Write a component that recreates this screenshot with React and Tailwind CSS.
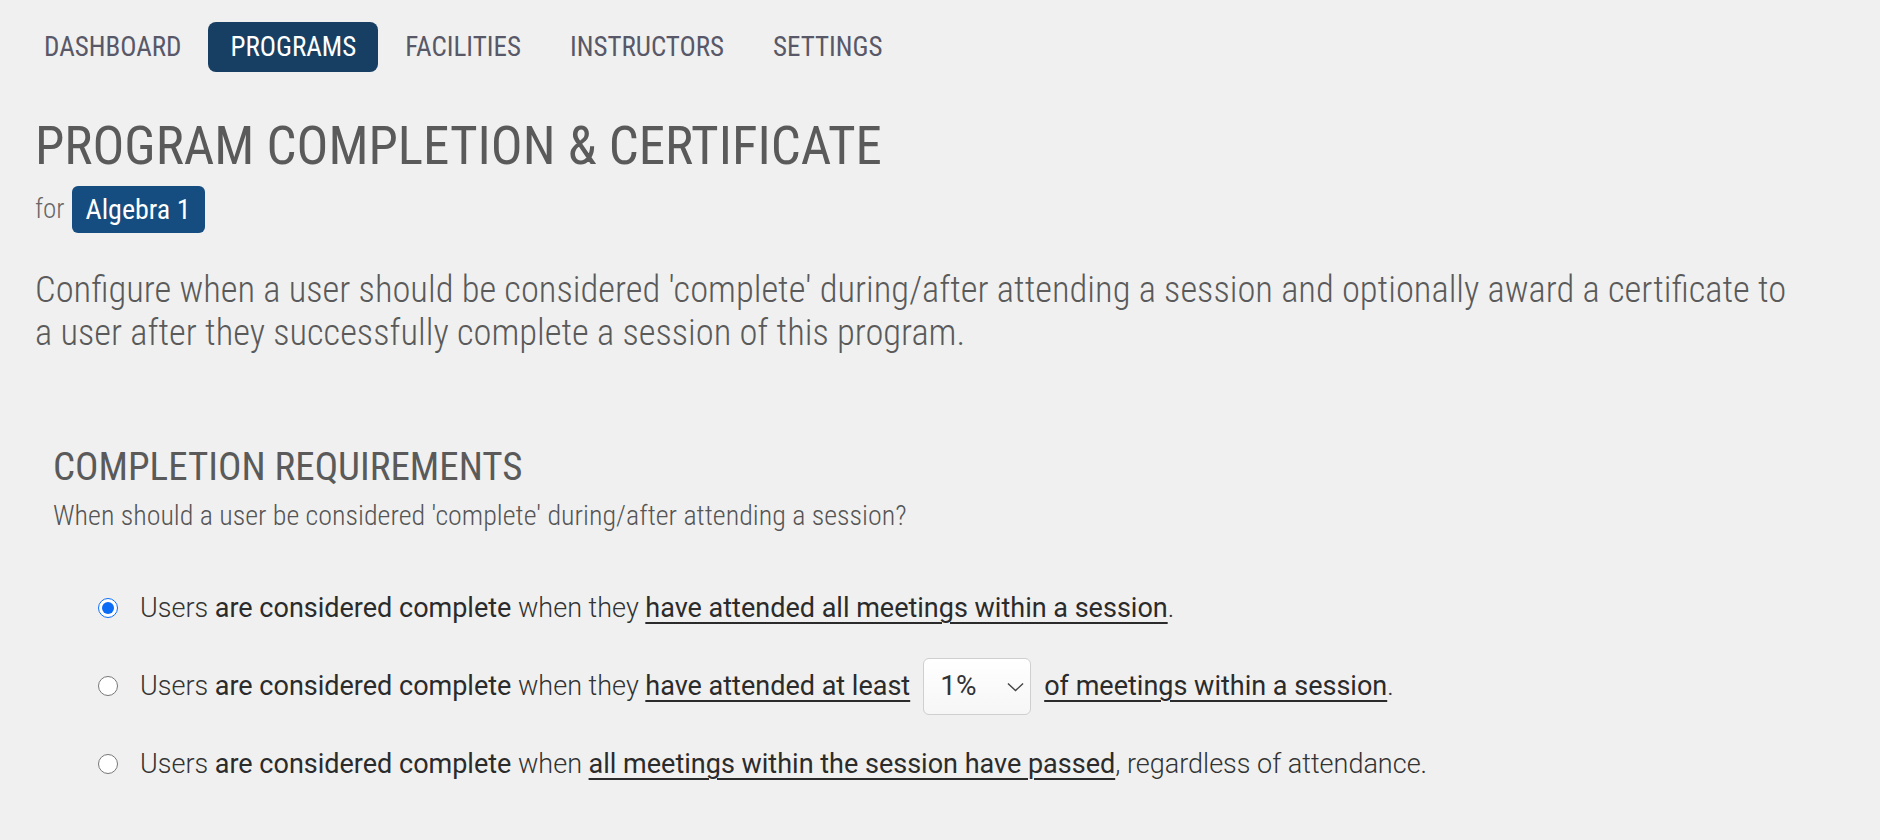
const navItems = [
  { label: 'DASHBOARD', active: false },
  { label: 'PROGRAMS', active: true },
  { label: 'FACILITIES', active: false },
  { label: 'INSTRUCTORS', active: false },
  { label: 'SETTINGS', active: false },
];

const cond = "font-['Roboto_Condensed','Liberation_Sans_Narrow','Roboto',sans-serif]";
const body = "font-['Roboto','Liberation_Sans',sans-serif]";

function Link({ children }) {
  return (
    <span className="font-normal text-[#2b2b2b] underline decoration-[2px] underline-offset-[5px]">
      {children}
    </span>
  );
}

function Lead() {
  return (
    <>
      <span className="font-light">Users </span>
      <span className="font-normal text-[#2b2b2b]">are considered complete</span>
      <span className="font-light"> when </span>
    </>
  );
}

function Option({ checked, children }) {
  return (
    <label className="flex items-center h-[78px]">
      <input
        type="radio"
        name="completion"
        defaultChecked={checked}
        className="w-[20px] h-[20px] m-0 accent-[#0b6cf5]"
      />
      <span className="ml-[22px] flex items-center whitespace-pre">{children}</span>
    </label>
  );
}

export default function App() {
  return (
    <div className={`min-h-screen bg-[#f0f0f0] ${body}`}>
      <nav className={`flex items-center gap-[5px] pl-[22px] pt-[22px] ${cond}`}>
        {navItems.map((item) => (
          <a
            key={item.label}
            className={`h-[50px] px-[22px] flex items-center rounded-[8px] text-[27px] ${
              item.active ? 'bg-[#173f63] text-white' : 'text-[#585868]'
            }`}
          >
            {item.label}
          </a>
        ))}
      </nav>

      <div className={`px-[35px] ${cond}`}>
        <h1 className="mt-[45px] text-[53px] leading-[58px] text-[#5a5a5a]">
          PROGRAM COMPLETION &amp; CERTIFICATE
        </h1>
        <div className="flex items-center mt-[11px]">
          <span className="text-[27px] font-light text-[#666]">for</span>
          <span className="ml-[7px] h-[47px] px-[14px] flex items-center rounded-[6px] bg-[#154d80] text-white text-[28px]">
            Algebra 1
          </span>
        </div>
        <p className="mt-[35px] max-w-[1768px] text-[36.5px] leading-[43px] font-light text-[#5a5a5a]">
          Configure when a user should be considered 'complete' during/after attending a session and optionally award a certificate to a user after they successfully complete a session of this program.
        </p>

        <section className="mt-[91px] pl-[18px]">
          <h2 className="text-[39px] leading-[44px] text-[#5a5a5a]">COMPLETION REQUIREMENTS</h2>
          <p className="mt-[6px] text-[28px] font-light text-[#555]">
            When should a user be considered 'complete' during/after attending a session?
          </p>
        </section>
      </div>

      <div className={`mt-[32px] pl-[98px] text-[27px] text-[#333] ${body}`}>
        <Option checked>
          <Lead />
          <span className="font-light">they </span>
          <Link>have attended all meetings within a session</Link>
          <span className="font-light">.</span>
        </Option>
        <Option>
          <Lead />
          <span className="font-light">they </span>
          <Link>have attended at least</Link>
          <span className="relative mx-[13px] w-[108px] h-[57px]">
            <select
              defaultValue="1"
              className="appearance-none w-full h-full pl-[16px] rounded-[6px] border border-[#cfcfcf] bg-gradient-to-b from-white to-[#f6f6f6] text-[28px] text-[#333] font-normal outline-none"
            >
              <option value="1">1%</option>
              <option value="25">25%</option>
              <option value="50">50%</option>
              <option value="75">75%</option>
              <option value="100">100%</option>
            </select>
            <svg
              viewBox="0 0 18 10"
              className="absolute right-[7px] top-[24px] w-[17px] h-[10px] pointer-events-none"
              fill="none"
              stroke="#444"
              strokeWidth="1.5"
            >
              <path d="M1 1.2 L9 8.8 L17 1.2" />
            </svg>
          </span>
          <Link>of meetings within a session</Link>
          <span className="font-light">.</span>
        </Option>
        <Option>
          <Lead />
          <Link>all meetings within the session have passed</Link>
          <span className="font-light">, regardless of attendance.</span>
        </Option>
      </div>
    </div>
  );
}
